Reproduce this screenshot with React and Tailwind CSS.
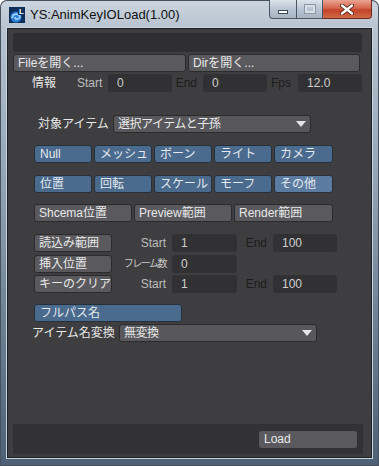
import React from "react";

const FONT = { fontFamily: '"Liberation Sans","Noto Sans CJK JP",sans-serif' };

function Field({ w, children }) {
  return (
    <div className={`${w} h-[18px] rounded-[3px] bg-[#313133] flex items-center pl-[9px] text-[#cfcfcf]`}>
      {children}
    </div>
  );
}

function GrayBtn({ w, children }) {
  return (
    <div className={`${w} h-[18px] rounded-[3px] border border-[#2b2b2d] bg-[#5a5a5e] flex items-center pl-[4px] text-[#e8e8e8] whitespace-nowrap`}>
      {children}
    </div>
  );
}

function BlueBtn({ w, children, light }) {
  return (
    <div
      className={`${w} h-[18px] rounded-[3px] border border-[#26303a] flex items-center pl-[5px] text-[#e4e9ef] whitespace-nowrap ${
        light ? "bg-[#5b7ca0]" : "bg-[#4a6a8e]"
      }`}
    >
      {children}
    </div>
  );
}

function Arrow() {
  return (
    <svg width="10" height="6" viewBox="0 0 10 6" className="shrink-0">
      <polygon points="0,0 10,0 5,6" fill="#e6e6e6" />
    </svg>
  );
}

function Dropdown({ w, children, h }) {
  return (
    <div className={`${w} ${h} rounded-[3px] border border-[#2b2b2d] bg-[#58585c] flex items-center pl-[4px] pr-[4px] text-[#e8e8e8]`}>
      <span className="flex-1 whitespace-nowrap tracking-[-0.5px]">{children}</span>
      <Arrow />
    </div>
  );
}

export default function App() {
  return (
    <div
      className="w-[379px] h-[466px] rounded-t-[7px] overflow-hidden flex flex-col text-[12px] leading-none bg-[linear-gradient(180deg,#cdd6e0_0px,#b7c3cf_28px,#98a8b9_160px,#6b7e92_330px,#4d6075_466px)] shadow-[inset_0_0_0_1px_#46525e]"
      style={FONT}
    >
      {/* title bar */}
      <div className="h-[28px] flex shrink-0">
        <div className="ml-[9px] mt-[7px] w-[16px] h-[16px] shrink-0">
          <svg width="16" height="16" viewBox="0 0 16 16">
            <rect x="0" y="0" width="16" height="16" fill="#0d2f5c" />
            <circle cx="7" cy="10" r="5.5" fill="#2f7fd6" />
            <path d="M3 11 C4 6, 10 6, 11 10 C10 13, 6 13, 6 10" stroke="#9fd3ff" strokeWidth="1.6" fill="none" />
            <rect x="9" y="0" width="7" height="8" fill="#0d2f5c" />
            <text x="10" y="7" fontSize="8" fontWeight="bold" fill="#ffffff" fontFamily="Liberation Sans">L</text>
          </svg>
        </div>
        <div className="ml-[5px] mt-[8px] text-[13px] text-[#111] whitespace-nowrap">YS:AnimKeyIOLoad(1.00)</div>
        <div className="ml-auto mr-[7px] flex self-start">
          <div className="w-[28px] h-[19px] rounded-bl-[4px] border border-[#4a5663] border-t-0 bg-[linear-gradient(180deg,#dde4ec,#b9c5d2_50%,#a6b4c3)] flex items-end justify-center pb-[4px]">
            <div className="w-[10px] h-[4px] bg-white border border-[#3c4652]" />
          </div>
          <div className="w-[26px] h-[19px] border-b border-r border-[#4a5663] bg-[linear-gradient(180deg,#dde4ec,#b9c5d2_50%,#a6b4c3)] flex items-center justify-center">
            <div className="w-[10px] h-[8px] border-2 border-[#d7dee6] shadow-[0_0_0_1px_#8b98a6]" />
          </div>
          <div className="w-[49px] h-[19px] rounded-br-[4px] border-b border-r border-[#6e2a1e] bg-[linear-gradient(180deg,#e9a493,#d4664d_45%,#c2432a_55%,#cf6a45)] flex items-center justify-center">
            <svg width="14" height="11" viewBox="0 0 14 11">
              <path d="M2 1.5 L12 9.5 M12 1.5 L2 9.5" stroke="#4a1a10" strokeWidth="4" strokeLinecap="round" />
              <path d="M2 1.5 L12 9.5 M12 1.5 L2 9.5" stroke="#ffffff" strokeWidth="2.4" strokeLinecap="round" />
            </svg>
          </div>
        </div>
      </div>

      {/* client area */}
      <div className="mx-[7px] mb-[8px] flex-1 border border-[#1d2126] bg-[#3e3e40] shadow-[0_0_0_1px_#c9d5e1] flex flex-col pl-[5px]">
        <div className="mt-[4px] w-[349px] h-[19px] rounded-[3px] bg-[#2f2f31]" />

        <div className="mt-[2px] flex gap-[2px]">
          <GrayBtn w="w-[173px]">Fileを開く...</GrayBtn>
          <GrayBtn w="w-[172px]">Dirを開く...</GrayBtn>
        </div>

        <div className="mt-[2px] h-[18px] flex items-center">
          <span className="ml-[19px] w-[45px] text-[#e8e8e8]">情報</span>
          <span className="w-[31px] text-right pr-[7px] text-[#bdbdbd]">Start</span>
          <Field w="w-[64px]">0</Field>
          <span className="w-[31px] text-right pr-[6px] text-[#1c1c1c]">End</span>
          <Field w="w-[64px]">0</Field>
          <span className="w-[31px] text-right pr-[7px] text-[#1c1c1c]">Fps</span>
          <Field w="w-[64px]">12.0</Field>
        </div>

        <div className="mt-[23px] h-[18px] flex items-center">
          <span className="ml-[25px] w-[75px] text-[#e8e8e8] whitespace-nowrap">対象アイテム</span>
          <Dropdown w="w-[198px]" h="h-[18px]">選択アイテムと子孫</Dropdown>
        </div>

        <div className="mt-[12px] ml-[21px] flex gap-[2px]">
          <BlueBtn w="w-[58px]">Null</BlueBtn>
          <BlueBtn w="w-[58px]">メッシュ</BlueBtn>
          <BlueBtn w="w-[58px]">ボーン</BlueBtn>
          <BlueBtn w="w-[58px]">ライト</BlueBtn>
          <BlueBtn w="w-[59px]">カメラ</BlueBtn>
        </div>

        <div className="mt-[12px] ml-[21px] flex gap-[2px]">
          <BlueBtn w="w-[58px]">位置</BlueBtn>
          <BlueBtn w="w-[58px]">回転</BlueBtn>
          <BlueBtn w="w-[58px]">スケール</BlueBtn>
          <BlueBtn w="w-[58px]">モーフ</BlueBtn>
          <BlueBtn w="w-[59px]" light>その他</BlueBtn>
        </div>

        <div className="mt-[11px] ml-[21px] flex gap-[2px]">
          <GrayBtn w="w-[98px]">Shcema位置</GrayBtn>
          <GrayBtn w="w-[98px]">Preview範囲</GrayBtn>
          <GrayBtn w="w-[99px]">Render範囲</GrayBtn>
        </div>

        <div className="mt-[12px] ml-[21px] h-[18px] flex items-center">
          <GrayBtn w="w-[78px]">読込み範囲</GrayBtn>
          <span className="w-[60px] text-right pr-[6px] text-[#bdbdbd]">Start</span>
          <Field w="w-[65px]">1</Field>
          <span className="w-[36px] text-right pr-[6px] text-[#1c1c1c]">End</span>
          <Field w="w-[64px]">100</Field>
        </div>

        <div className="mt-[3px] ml-[21px] h-[18px] flex items-center">
          <GrayBtn w="w-[78px]">挿入位置</GrayBtn>
          <span className="w-[60px] text-right pr-[6px] text-[#c8c8c8] text-[10px] tracking-[-1.5px] whitespace-nowrap">フレーム数</span>
          <Field w="w-[65px]">0</Field>
        </div>

        <div className="mt-[2px] ml-[21px] h-[18px] flex items-center">
          <GrayBtn w="w-[78px]">キーのクリア</GrayBtn>
          <span className="w-[60px] text-right pr-[6px] text-[#bdbdbd]">Start</span>
          <Field w="w-[65px]">1</Field>
          <span className="w-[36px] text-right pr-[6px] text-[#1c1c1c]">End</span>
          <Field w="w-[64px]">100</Field>
        </div>

        <div className="mt-[11px] ml-[21px] flex">
          <BlueBtn w="w-[148px]">フルパス名</BlueBtn>
        </div>

        <div className="mt-[2px] h-[18px] flex items-center">
          <span className="ml-[19px] w-[87px] text-[#e8e8e8] whitespace-nowrap">アイテム名変換</span>
          <Dropdown w="w-[198px]" h="h-[18px]">無変換</Dropdown>
        </div>

        <div className="mt-auto mb-[3px] w-[350px] h-[30px] bg-[#323234] flex items-center justify-end pr-[6px]">
          <div className="w-[98px] h-[17px] rounded-[3px] bg-[#5a5a5e] flex items-center pl-[5px] text-[#e8e8e8]">Load</div>
        </div>
      </div>
    </div>
  );
}
